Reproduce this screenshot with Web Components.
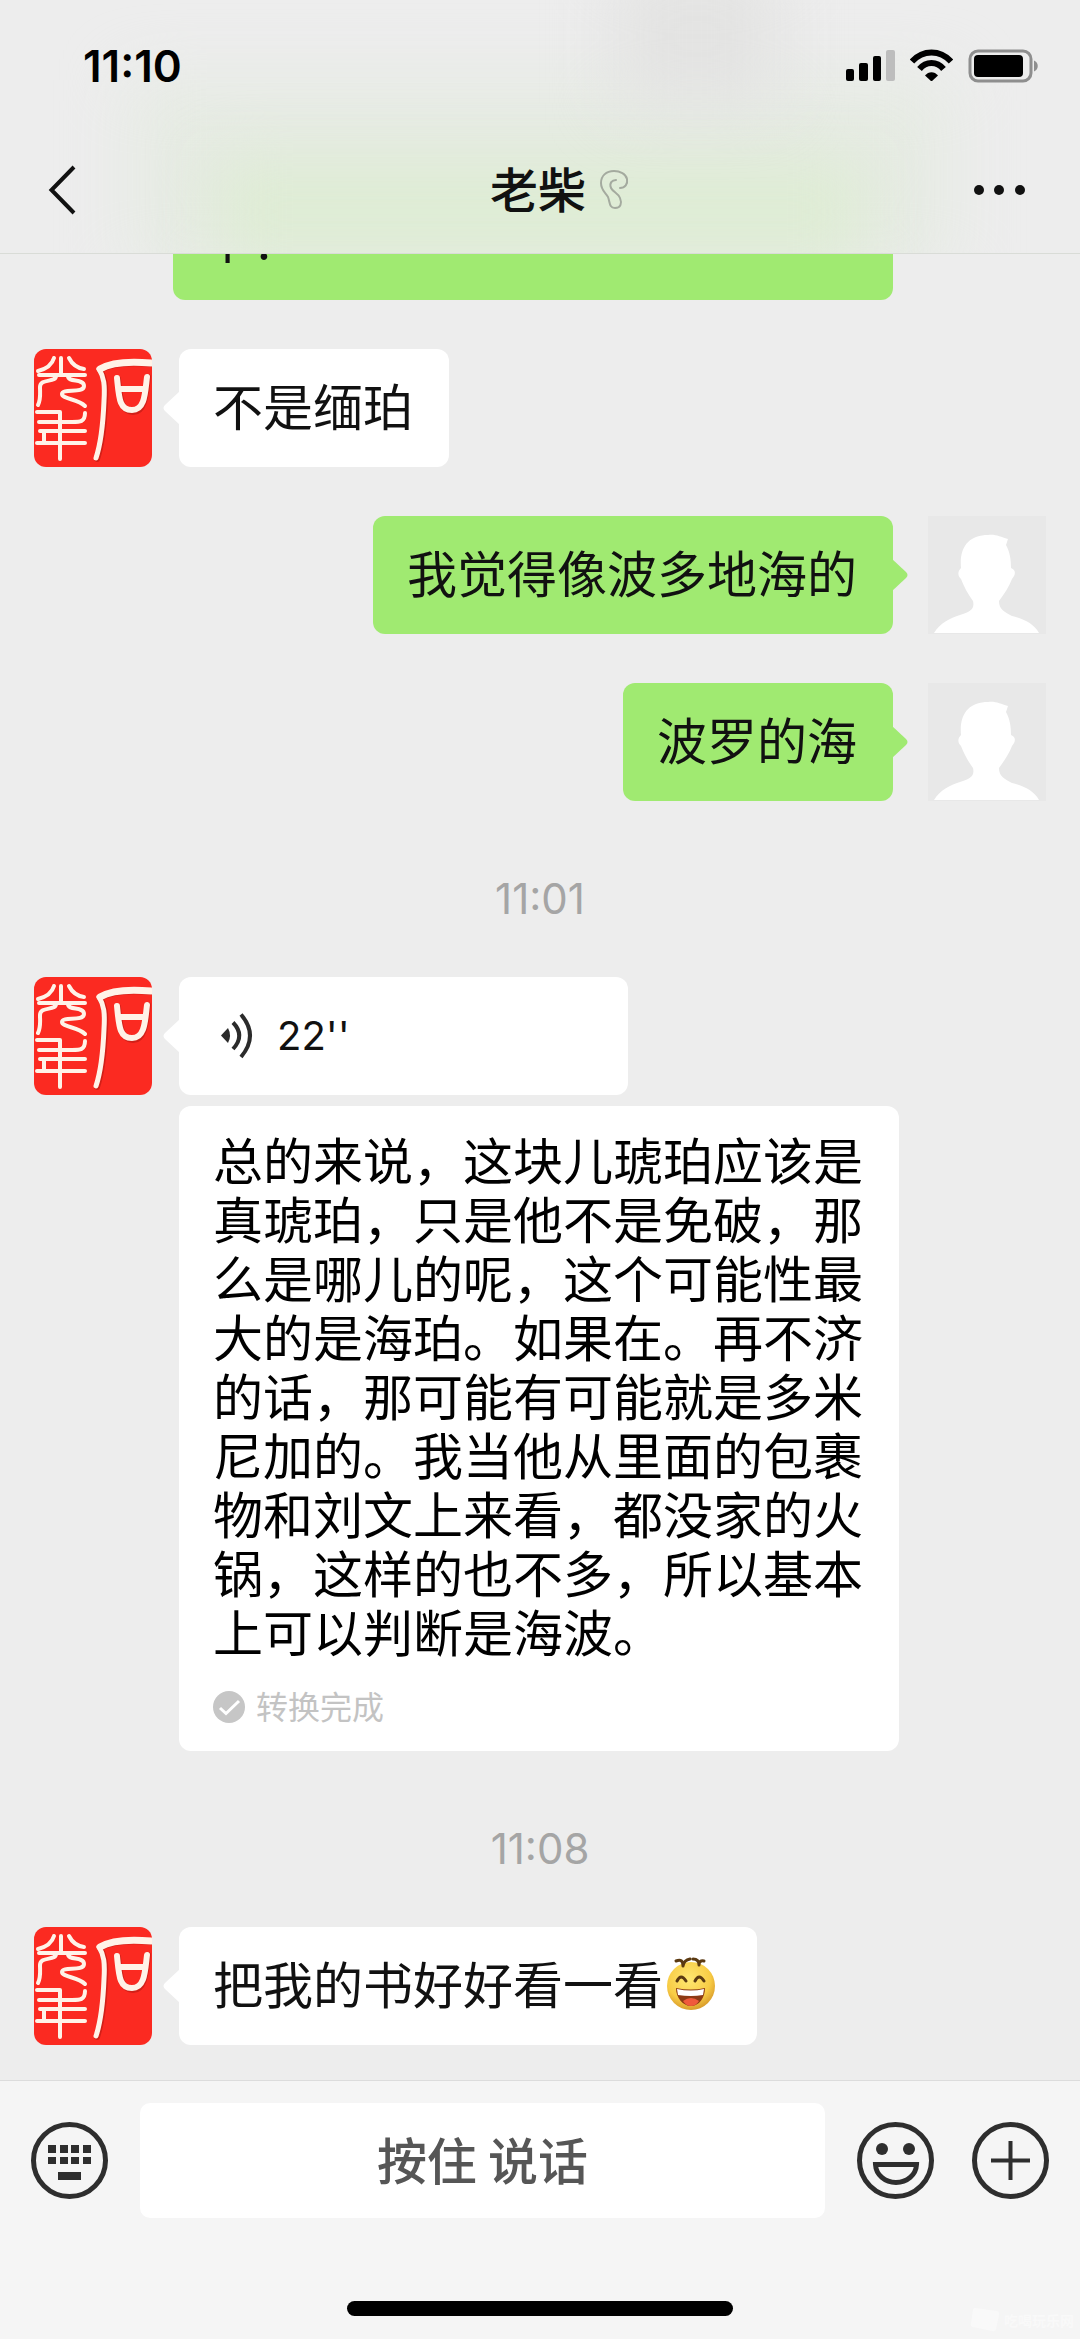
<!DOCTYPE html>
<html lang="zh-CN">
<head>
<meta charset="utf-8">
<meta name="viewport" content="width=device-width, initial-scale=1">
<title>老柴</title>
<style>
  body {
    margin: 0;
    font-family: "Noto Sans CJK SC", sans-serif;
    color: #111;
    background: #ededed;
  }
</style>
</head>
<body>
<chat-app>
  <chat-header slot="header" time="11:10">老柴</chat-header>

  <chat-message side="right" wide><br>卜.</chat-message>
  <chat-message>不是缅珀</chat-message>
  <chat-message side="right">我觉得像波多地海的</chat-message>
  <chat-message side="right">波罗的海</chat-message>
  <chat-time>11:01</chat-time>
  <chat-message voice>
    <voice-clip>22''</voice-clip>
    <voice-text slot="extra" status="转换完成">总的来说，这块儿琥珀应该是真琥珀，只是他不是免破，那么是哪儿的呢，这个可能性最大的是海珀。如果在。再不济的话，那可能有可能就是多米尼加的。我当他从里面的包裹物和刘文上来看，都没家的火锅，这样的也不多，所以基本上可以判断是海波。</voice-text>
  </chat-message>
  <chat-time>11:08</chat-time>
  <chat-message>把我的书好好看一看<laugh-emoji></laugh-emoji></chat-message>

  <chat-input slot="footer">按住 说话</chat-input>
</chat-app>

<script>
class ChatApp extends HTMLElement {
  constructor() {
    super();
    this.root = this.attachShadow({mode: 'open'});
    this.root.innerHTML = `
      <style>
      :host {
        display: flex;
        flex-direction: column;
        height: 100vh;
      }
      /* the list sticks to its last message, older ones go up under the header */
      main {
        flex: 1;
        min-height: 0;
        overflow: hidden;
        display: flex;
        flex-direction: column;
        justify-content: flex-end;
        gap: 49px;
        padding: 0 34px 35px;
      }
      </style>
      <slot name="header"></slot>
      <main><slot></slot></main>
      <slot name="footer"></slot>
    `;
  }
}

class ChatHeader extends HTMLElement {
  constructor() {
    super();
    this.root = this.attachShadow({mode: 'open'});
    this.root.innerHTML = `
      <style>
      :host {
        display: block;
        position: relative;
        overflow: hidden;
        padding-bottom: 5px;
        border-bottom: 1px solid #d9dcd7;
        background: #ededed;
      }
      .glow {
        position: absolute;
        filter: blur(32px);
      }
      .soft {
        inset: 80px 12% -20px 12%;
        background: #e6ebe3;
      }
      .green {
        inset: 160px 20% -10px 20%;
        background: #deecd4;
      }
      .grey {
        inset: -30px 28% 150px 57%;
        background: #e3e3e2;
      }
      .status, nav {
        position: relative;
        display: flex;
        align-items: center;
      }
      .status {
        height: 132px;
        padding: 0 40px 0 83px;
        justify-content: space-between;
      }
      .time {
        font: 600 44px/48px Inter, sans-serif;
        color: #000;
      }
      .signals {
        display: flex;
        gap: 15px;
      }
      svg {
        display: block;
      }
      nav {
        display: grid;
        grid-template-columns: 1fr auto 1fr;
        height: 116px;
        padding: 0 50px 0 46px;
      }
      h1 {
        margin: 0;
        padding-bottom: 6px;
        font-size: 48px;
        line-height: 58px;
        font-weight: 500;
      }
      button {
        padding: 0;
        border: 0;
        background: none;
        color: inherit;
        justify-self: start;
      }
      .right {
        display: flex;
        align-items: center;
        justify-content: space-between;
        padding-left: 14px;
      }
      </style>
      <div class="glow soft"></div>
      <div class="glow green"></div>
      <div class="glow grey"></div>
      <div class="status">
        <span class="time"></span>
        <div class="signals">
          <svg width="49" height="32" viewBox="0 0 49 32">
            <rect x="0" y="20" width="8" height="12" rx="2"/>
            <rect x="13" y="14" width="9" height="18" rx="2"/>
            <rect x="27" y="7" width="8" height="25" rx="2"/>
            <rect x="40" y="1" width="9" height="31" rx="2" fill="#bdbdbd"/>
          </svg>
          <svg width="43" height="32" viewBox="0 0 43 32">
            <g fill="none" stroke="#000" stroke-width="6">
              <path d="M2 12.500C13 .500 30 .500 41 12.500"/>
              <path d="M9.500 20C16 12 27 12 33.500 20"/>
            </g>
            <path d="M15 26.500C18.500 22 24.500 22 28 26.500L21.500 32.500Z"/>
          </svg>
          <svg width="72" height="34" viewBox="0 0 72 34">
            <rect x="2" y="2" width="61" height="30" rx="8" fill="none" stroke="#8e8e8e" stroke-width="3"/>
            <rect x="6" y="6" width="49" height="22" rx="4"/>
            <path d="M66 11.500C71 13.500 71 20.500 66 22.500Z" fill="#8e8e8e"/>
          </svg>
        </div>
      </div>
      <nav>
        <button type="button" aria-label="返回">
          <svg width="30" height="50" viewBox="0 0 30 50" fill="none" stroke="#111" stroke-width="4">
            <path d="M28 2L5.500 25L28 48"/>
          </svg>
        </button>
        <h1><slot></slot></h1>
        <div class="right">
          <svg width="30" height="40" viewBox="0 0 30 40" fill="none" stroke="#a4aa9f" stroke-width="2" stroke-linecap="round">
            <path d="M20 18C25 18 28 14 27 9C26 4 20 1 14 1C6 1 1 6 1 13C1 20 5 22 8 27C10 32 9 38 15 38C21 38 22 33 20 28C18 23 13 22 11 18C9 13 12 10 16 10"/>
          </svg>
          <button type="button" aria-label="更多">
            <svg width="60" height="20" viewBox="0 0 60 20" fill="#111">
              <circle cx="9" cy="10" r="5"/>
              <circle cx="29" cy="10" r="5"/>
              <circle cx="50" cy="10" r="5"/>
            </svg>
          </button>
        </div>
      </nav>
    `;
  }

  connectedCallback() {
    this.root.querySelector('.time').textContent = this.getAttribute('time');
  }
}

class ChatAvatar extends HTMLElement {
  constructor() {
    super();
    this.root = this.attachShadow({mode: 'open'});
    this.root.innerHTML = `
      <style>
      :host {
        display: block;
        flex: none;
        width: 118px;
        height: 118px;
      }
      svg {
        display: block;
        border-radius: 12px;
      }
      :host([kind="blank"]) svg {
        border-radius: 0;
      }
      </style>
    `;
  }

  static get seal() {
    return `
      <svg width="118" height="118" viewBox="0 0 118 118">
        <rect width="118" height="118" fill="#fb2a21"/>
        <g fill="none" stroke="#a8160f" stroke-opacity=".5" stroke-width="6" stroke-linecap="round" transform="translate(1 1)">
          <path d="M117 14C95 12 76 14 65 20C70 28 71 36 70 52C69 76 67 94 62 109"/>
          <path d="M83 29C85 48 86 62 98 62C110 62 111 44 113 27"/>
        </g>
        <g fill="none" stroke="#fff3e8" stroke-linecap="round" stroke-linejoin="round">
          <path stroke-width="7" d="M117 14C95 12 76 14 66 20"/>
          <path stroke-width="5" d="M65 20C70 28 71 36 70 52C69 76 67 94 62 109"/>
          <path stroke-width="6" d="M83 29C85 48 85 61 98 61C111 61 111 44 113 28M85 40H110"/>
          <g stroke-width="4">
            <path d="M27 9V26M20 9C18 16 12 20 4 22M35 9C38 15 43 19 50 20M5 26H51"/>
            <path d="M22 27C22 34 6 29 6 38C6 45 7 50 4 56"/>
            <path d="M34 27C34 34 50 29 50 37C50 45 28 39 28 45C28 50 44 50 51 57"/>
            <path d="M3 63H26V110M51 64C51 73 46 73 38 73H5M6 82H51M10 82V94M3 94H51"/>
          </g>
        </g>
      </svg>
    `;
  }

  static get blank() {
    return `
      <svg width="118" height="118" viewBox="0 0 118 118">
        <rect width="118" height="118" fill="#e8e8e8"/>
        <path fill="#fff" d="M6 117C12 107 22 102 32 99C42 96 47 93 45 85C40 78 36 71 33 63C30 60 29 56 33 52C31 30 42 19 60 19C68 18 72 21 80 23L78 29C82 36 83 44 83 52C88 54 88 58 84 63C81 71 76 78 71 85C71 93 76 96 84 100C96 103 106 108 111 117Z"/>
      </svg>
    `;
  }

  connectedCallback() {
    const blank = this.getAttribute('kind') === 'blank';
    this.root.innerHTML += blank ? ChatAvatar.blank : ChatAvatar.seal;
  }
}

class ChatMessage extends HTMLElement {
  constructor() {
    super();
    const kind = this.getAttribute('side') === 'right' ? 'blank' : 'seal';
    this.root = this.attachShadow({mode: 'open'});
    this.root.innerHTML = `
      <style>
      :host {
        display: flex;
        flex: none;
        align-items: flex-start;
        gap: 27px;
        --bubble: #fff;
      }
      :host([side="right"]) {
        flex-direction: row-reverse;
        gap: 35px;
        --bubble: #a0ea71;
      }
      .column {
        display: flex;
        flex-direction: column;
        align-items: flex-start;
        gap: 11px;
        max-width: 720px;
      }
      .bubble {
        position: relative;
        box-sizing: border-box;
        min-height: 118px;
        padding: 26px 36px 34px 34px;
        border-radius: 12px;
        background: var(--bubble);
        font-size: 50px;
        line-height: 58px;
      }
      :host([wide]) .column {
        width: 720px;
        align-items: stretch;
      }
      :host([voice]) .bubble {
        width: 449px;
        padding: 30px 34px;
      }
      .tail {
        position: absolute;
        top: 42px;
        left: -16px;
        fill: var(--bubble);
      }
      :host([side="right"]) .tail {
        left: auto;
        right: -15px;
        transform: scaleX(-1);
      }
      </style>
      <chat-avatar kind="${kind}"></chat-avatar>
      <div class="column">
        <div class="bubble">
          <svg class="tail" width="17" height="34" viewBox="0 0 17 34">
            <path d="M17 0L2 14Q-1 17 2 20L17 34Z"/>
          </svg>
          <slot></slot>
        </div>
        <slot name="extra"></slot>
      </div>
    `;
  }
}

class ChatTime extends HTMLElement {
  constructor() {
    super();
    this.root = this.attachShadow({mode: 'open'});
    this.root.innerHTML = `
      <style>
      :host {
        display: block;
        flex: none;
        margin-top: 20px;
        text-align: center;
        font: 400 42px/58px Inter, sans-serif;
        color: #a5a5a5;
      }
      </style>
      <slot></slot>
    `;
  }
}

class VoiceClip extends HTMLElement {
  constructor() {
    super();
    this.root = this.attachShadow({mode: 'open'});
    this.root.innerHTML = `
      <style>
      :host {
        display: flex;
        align-items: center;
        gap: 24px;
        padding-left: 8px;
        font: 400 40px/58px Inter, sans-serif;
      }
      </style>
      <svg width="32" height="46" viewBox="0 0 32 46" fill="none" stroke="#2b2b2b" stroke-width="4">
        <path d="M0 22.500L7 15Q11 22.500 7 30Z" fill="#2b2b2b" stroke="none"/>
        <path d="M12 9.500Q24.500 22.500 12 36"/>
        <path d="M20 1.500Q38 22.500 20 44"/>
      </svg>
      <slot></slot>
    `;
  }
}

class VoiceText extends HTMLElement {
  constructor() {
    super();
    this.root = this.attachShadow({mode: 'open'});
    this.root.innerHTML = `
      <style>
      :host {
        display: block;
        padding: 23px 36px 24px 34px;
        border-radius: 12px;
        background: #fff;
        color: #000;
        font-size: 50px;
        line-height: 59px;
      }
      p {
        margin: 0 0 27px;
        line-break: anywhere;
      }
      .status {
        display: flex;
        align-items: center;
        gap: 11px;
        font-size: 32px;
        line-height: 40px;
        color: #c3c3c3;
      }
      .status span {
        padding-bottom: 4px;
        line-height: 36px;
      }
      </style>
      <p><slot></slot></p>
      <div class="status">
        <svg width="32" height="32" viewBox="0 0 32 32">
          <circle cx="16" cy="16" r="16" fill="#c6c6c6"/>
          <path d="M7 17L13 22.500L26 10" fill="none" stroke="#fff" stroke-width="3"/>
        </svg>
        <span></span>
      </div>
    `;
  }

  connectedCallback() {
    this.root.querySelector('span').textContent = this.getAttribute('status');
  }
}

class LaughEmoji extends HTMLElement {
  constructor() {
    super();
    this.root = this.attachShadow({mode: 'open'});
    this.root.innerHTML = `
      <style>
      :host {
        display: inline-block;
        width: 58px;
        height: 58px;
        vertical-align: top;
      }
      svg {
        display: block;
      }
      </style>
      <svg width="58" height="58" viewBox="0 0 58 58" fill="none" stroke-linecap="round">
        <defs>
          <radialGradient id="skin" cx=".45" cy=".35" r=".65">
            <stop offset="0" stop-color="#ffe872"/>
            <stop offset=".7" stop-color="#f8cc45"/>
            <stop offset="1" stop-color="#d99c2b"/>
          </radialGradient>
        </defs>
        <circle cx="28" cy="33" r="24" fill="url(#skin)"/>
        <g stroke="#5b3a12" stroke-width="3">
          <path d="M13 8Q20 5 20 13M27 6Q21 7 20 13M30 6Q36 6 36 12M41 8Q36 7 36 12"/>
          <path d="M14 28Q18 20 23 28M32 28Q36 20 41 28"/>
        </g>
        <path d="M13 35Q28 38 42 35C42 45 36 53 28 53C20 53 13 45 13 35Z" fill="#8d3a14"/>
        <path d="M14 36Q28 39 41 36L40 42Q28 44 15 42Z" fill="#fff"/>
        <path d="M20 48Q28 42 36 48Q33 53 28 53Q23 53 20 48Z" fill="#f05a3c"/>
      </svg>
    `;
  }
}

class ChatInput extends HTMLElement {
  constructor() {
    super();
    this.root = this.attachShadow({mode: 'open'});
    this.root.innerHTML = `
      <style>
      :host {
        display: block;
        position: relative;
        border-top: 1px solid #dcdcdc;
        background: #f5f5f5;
      }
      .bar {
        display: flex;
        align-items: center;
        gap: 32px;
        padding: 22px 31px 83px;
      }
      .tools {
        display: flex;
        gap: 38px;
      }
      button {
        padding: 0;
        border: 0;
        background: none;
        font-family: inherit;
      }
      .talk {
        flex: 1;
        height: 115px;
        padding-bottom: 6px;
        border-radius: 10px;
        background: #fff;
        color: #565656;
        font-size: 50px;
        line-height: 58px;
        font-weight: 500;
      }
      svg {
        display: block;
      }
      .home {
        width: 386px;
        height: 15px;
        margin: 0 auto 23px;
        border-radius: 8px;
        background: #000;
      }
      .mark {
        position: absolute;
        right: 6px;
        bottom: 6px;
        display: flex;
        align-items: center;
        gap: 4px;
        font-size: 14px;
        line-height: 24px;
        font-weight: 700;
        color: #f9f9f9;
      }
      </style>
      <div class="bar">
        <button type="button" aria-label="键盘">
          <svg width="77" height="77" viewBox="0 0 77 77" fill="#2e2e2e">
            <circle cx="38.500" cy="38.500" r="36" fill="none" stroke="#2e2e2e" stroke-width="5"/>
            <path d="M17 23h8v8h-8zM29 23h8v8h-8zM40 23h8v8h-8zM52 23h8v8h-8zM17 35h8v7h-8zM29 35h8v7h-8zM40 35h8v7h-8zM52 35h8v7h-8zM27 50h23v8h-23z"/>
          </svg>
        </button>
        <button type="button" class="talk"><slot></slot></button>
        <div class="tools">
          <button type="button" aria-label="表情">
            <svg width="77" height="77" viewBox="0 0 77 77" fill="none" stroke="#2e2e2e" stroke-width="5">
              <circle cx="38.500" cy="38.500" r="36"/>
              <path d="M18.500 42.500H59.500C59 53 50 60.500 39 60.500C28 60.500 19 53 18.500 42.500Z"/>
              <g fill="#2e2e2e" stroke="none">
                <circle cx="25" cy="27" r="6"/>
                <circle cx="52" cy="27" r="6"/>
              </g>
            </svg>
          </button>
          <button type="button" aria-label="更多功能">
            <svg width="77" height="77" viewBox="0 0 77 77" fill="none" stroke="#2e2e2e" stroke-width="5">
              <circle cx="38.500" cy="38.500" r="36"/>
              <path d="M19 38.500H58M38.500 19V58" stroke-width="4"/>
            </svg>
          </button>
        </div>
      </div>
      <div class="home"></div>
      <div class="mark">
        <svg width="30" height="26" viewBox="0 0 30 26" fill="#f9f9f9">
          <path d="M5 1L27 4Q30 5 29 8L26 22Q25 25 22 24L3 20Q0 19 1 16L3 3Q3 1 5 1Z"/>
        </svg>
        <span>吃喝玩乐网</span>
      </div>
    `;
  }
}

customElements.define('chat-app', ChatApp);
customElements.define('chat-header', ChatHeader);
customElements.define('chat-avatar', ChatAvatar);
customElements.define('chat-message', ChatMessage);
customElements.define('chat-time', ChatTime);
customElements.define('voice-clip', VoiceClip);
customElements.define('voice-text', VoiceText);
customElements.define('laugh-emoji', LaughEmoji);
customElements.define('chat-input', ChatInput);
</script>
</body>
</html>
